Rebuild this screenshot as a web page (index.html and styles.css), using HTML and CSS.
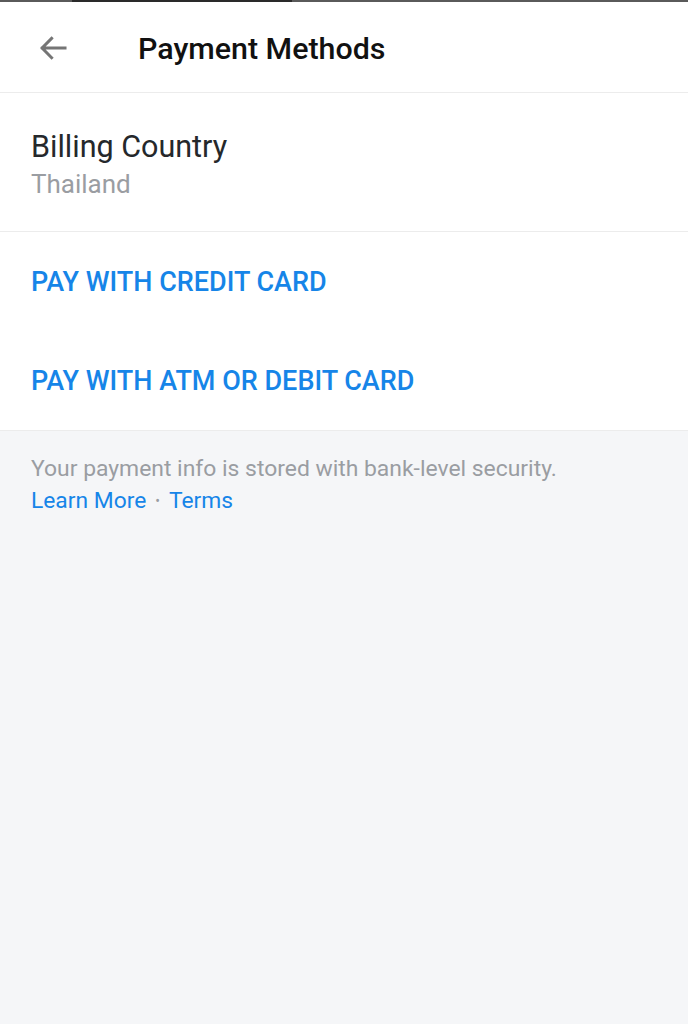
FILE: index.html
```html
<!DOCTYPE html>
<html>
<head>
<meta charset="utf-8">
<link rel="stylesheet" href="styles.css">
</head>
<body>
<div class="statusline"><div class="statusdark"></div></div>
<header class="header">
  <div class="back">
    <svg width="34" height="34" viewBox="0 0 24 24"><path d="M20.5 12H4.5M11 5.2L4.3 12l6.7 6.8" fill="none" stroke="#757575" stroke-width="2.1" stroke-linecap="square"/></svg>
  </div>
  <h1 class="title">Payment Methods</h1>
</header>
<section class="billing">
  <div class="billing-label">Billing Country</div>
  <div class="billing-value">Thailand</div>
</section>
<section class="options">
  <div class="option">PAY WITH CREDIT CARD</div>
  <div class="option">PAY WITH ATM OR DEBIT CARD</div>
</section>
<footer class="note">
  <div class="note-text">Your payment info is stored with bank-level security.</div>
  <div class="note-links"><span class="link">Learn More</span><span class="dot">•</span><span class="link">Terms</span></div>
</footer>
</body>
</html>
```

FILE: styles.css
```css
html, body {
  margin: 0;
  padding: 0;
  height: 100%;
}
body {
  background: #f5f6f8;
  font-family: Roboto, "Noto Sans", sans-serif;
}
.statusline {
  height: 2px;
  background: #5a5a5a;
  display: flex;
  padding-left: 72px;
}
.statusdark {
  width: 220px;
  background: #2a2a2a;
}
.header {
  background: #fff;
  height: 90px;
  display: flex;
  align-items: center;
  border-bottom: 1px solid #ececec;
}
.back {
  width: 138px;
  display: flex;
  padding-left: 36px;
  box-sizing: border-box;
  padding-top: 2px;
}
.title {
  margin: 0;
  font-size: 30.4px;
  font-weight: 500;
  color: #111;
  padding-top: 2px;
}
.billing {
  background: #fff;
  padding: 36px 31px 0;
  height: 102px;
  border-bottom: 1px solid #ececec;
}
.billing-label {
  font-size: 30.5px;
  color: #25282b;
  line-height: 36px;
}
.billing-value {
  font-size: 26px;
  color: #9a9da2;
  line-height: 38px;
}
.options {
  background: #fff;
  border-bottom: 1px solid #ececec;
}
.option {
  height: 99px;
  display: flex;
  align-items: center;
  padding: 0 31px;
  font-size: 27px;
  font-weight: 500;
  color: #1685e8;
}
.note {
  padding: 22px 31px 0;
}
.note-text {
  font-size: 22.9px;
  color: #9a9da2;
  line-height: 32px;
}
.note-links {
  font-size: 22.8px;
  line-height: 32px;
  display: flex;
  align-items: center;
}
.link {
  color: #1685e8;
}
.dot {
  color: #9a9da2;
  font-size: 14px;
  margin: 0 9px;
}
```
